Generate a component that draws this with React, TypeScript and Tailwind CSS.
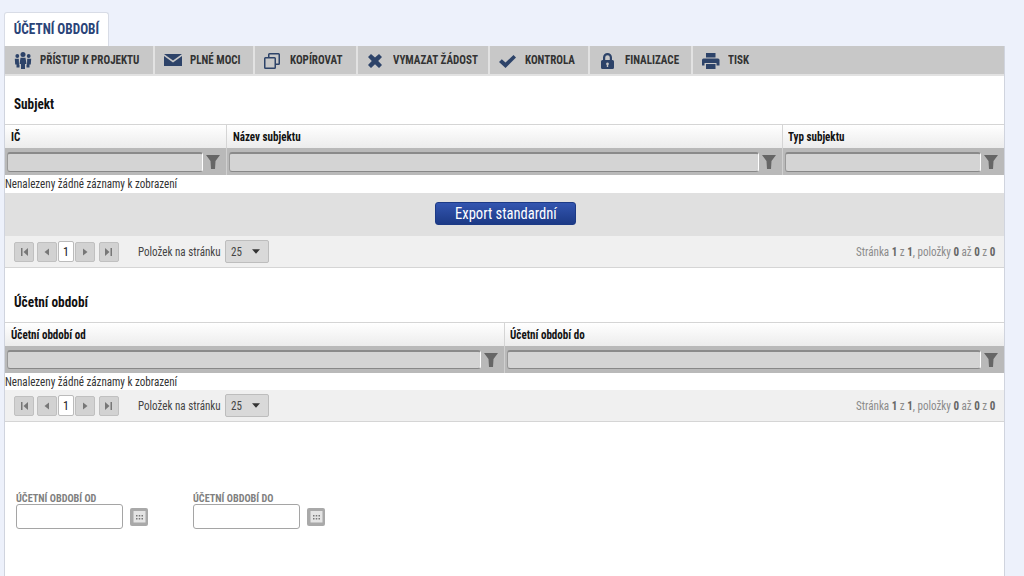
import React from "react";

const F = "font-['Roboto_Condensed','Liberation_Sans_Narrow',Roboto,sans-serif]";

const Ic = ({ children }: { children: React.ReactNode }) => (
  <svg width={20} height={20} viewBox="0 0 20 20" fill="#2d4369" className="shrink-0">{children}</svg>
);

const N = ({ children, o = "origin-left", s = "scale-x-[0.92]" }: { children: React.ReactNode; o?: string; s?: string }) => (
  <span className={`inline-block whitespace-nowrap ${o} ${s}`}>{children}</span>
);

const tools: { label: string; w: string; icon: React.ReactNode }[] = [
  { label: "PŘÍSTUP K PROJEKTU", w: "w-[150px]", icon: <Ic><circle cx="9" cy="4.500" r="2.500"/><circle cx="3.300" cy="6" r="1.900"/><circle cx="14.700" cy="6" r="1.900"/><path d="M6.500 7.800h5l1 6.200h-1.500v5H7v-5H5.500zM.8 8.800h4l.2 5.700H5.500V17.500H2.500v-3H1.200zM17.200 8.800h-4l-.2 5.700h-.5V17.500h3v-3h1.300z"/></Ic> },
  { label: "PLNÉ MOCI", w: "w-[100px]", icon: <Ic><path d="M0 4h18L9 10.500zM0 6l9 6.500L18 6v10H0z"/></Ic> },
  { label: "KOPÍROVAT", w: "w-[103px]", icon: <Ic><path fillRule="evenodd" d="M5.500 3h9A1.500 1.500 0 0116 4.500v9a1.500 1.500 0 01-1.500 1.500H12v2.500A1.500 1.500 0 0110.500 19h-9A1.500 1.500 0 010 17.500v-9A1.500 1.500 0 011.500 7H4V4.500A1.500 1.500 0 015.500 3zM5.500 4.500V7h5A1.500 1.500 0 0112 8.500v5h2.500v-9zM1.500 8.500v9h9v-9z"/></Ic> },
  { label: "VYMAZAT ŽÁDOST", w: "w-[132px]", icon: <Ic><path d="M4 4L8 7.500 12 4l3 3-3.800 4 3.800 4-3 3-4-3.700L4 18l-3-3 3.800-4L1 7z"/></Ic> },
  { label: "KONTROLA", w: "w-[100px]", icon: <Ic><path d="M0 12l2.800-2.800L6.500 12.500 14.500 5 17 7.500 6.500 18z"/></Ic> },
  { label: "FINALIZACE", w: "w-[103px]", icon: <Ic><path fillRule="evenodd" d="M4 10V7.500a4.500 4.500 0 019 0V10h.5a1.500 1.500 0 011.500 1.500v6a1.500 1.500 0 01-1.500 1.500h-10A1.500 1.500 0 012 17.500v-6A1.500 1.500 0 013.500 10zm2.200 0h4.600V7.500a2.300 2.300 0 00-4.600 0zM8.500 12.500a1.400 1.400 0 00-.7 2.600V17h1.400v-1.900a1.400 1.400 0 00-.7-2.600z"/></Ic> },
  { label: "TISK", w: "w-[80px]", icon: <Ic><path fillRule="evenodd" d="M4 3h9.500v4.500H4zM1.500 8.500h14.500A1.500 1.500 0 0117.500 10v5.500h-3V13h-12v2.500H0V10a1.500 1.500 0 011.500-1.500zM4 14h9.500v5H4z"/></Ic> },
];

const Funnel = () => (
  <svg width="14" height="16" viewBox="0 0 14 16" fill="#666" className="shrink-0"><path d="M0 1h14L9.500 7 9 15H5l-.5-8z"/></svg>
);

const Input = ({ h }: { h: string }) => (
  <div className={`${h} min-w-0 flex-1 rounded-[3px] border-t-2 border-l border-r border-b border-t-[#8a8a8a] border-l-[#9a9a9a] border-r-white border-b-[#888] bg-[#d4d4d4]`} />
);

type GridProps = { cols: { name: string; w: string; pl: string }[]; fh: string; ih: string; tp: string; rh: string };

const Grid = ({ cols, fh, ih, tp, rh }: GridProps) => (
  <>
    <div className="flex h-[24px] border-t border-[#d5d5d5] bg-gradient-to-b from-white to-[#ececec]">
      {cols.map((c, i) => (
        <div key={c.name} className={`${c.w} ${i ? "border-l border-[#d5d5d5]" : ""} flex items-center ${c.pl} ${tp} text-[12px] font-bold text-[#111]`}><N>{c.name}</N></div>
      ))}
    </div>
    <div className={`flex ${fh} bg-[#b9b9b9]`}>
      {cols.map((c, i) => (
        <div key={c.name} className={`${c.w} ${i ? "border-l border-[#d0d0d0]" : ""} flex items-center gap-[3px] pl-[2px] pr-[6px] ${tp}`}>
          <Input h={ih} /><Funnel />
        </div>
      ))}
    </div>
    <div className={`flex ${rh} items-center text-[12px] text-[#333]`}><N>Nenalezeny žádné záznamy k zobrazení</N></div>
  </>
);

const PBtn = ({ children }: { children: React.ReactNode }) => (
  <div className="flex h-[20px] w-[20px] items-center justify-center rounded-[2px] border border-[#c0c0c0] bg-[#d2d2d2]">
    <svg width="10" height="10" viewBox="0 0 10 10" fill="#777">{children}</svg>
  </div>
);

const Pager = () => (
  <div className="flex h-[32px] items-center border-b border-[#d5d5d5] bg-[#f0f0f0] px-[9px] text-[12px] text-[#444]">
    <PBtn><path d="M2 1h1.500v8H2zM9 1v8L4.500 5z"/></PBtn>
    <div className="ml-[3px]"><PBtn><path d="M7 1.500v7L2.500 5z"/></PBtn></div>
    <div className="ml-[1px] flex h-[21px] w-[16px] items-center justify-center rounded-[2px] border border-[#bbb] bg-white text-[12px] text-[#222]">1</div>
    <div className="ml-px"><PBtn><path d="M3 1.500v7L7.500 5z"/></PBtn></div>
    <div className="ml-[4px]"><PBtn><path d="M1 1v8l4.500-4zM6.500 1H8v8H6.500z"/></PBtn></div>
    <div className="ml-[19px] w-[83px]"><N>Položek na stránku</N></div>
    <div className="ml-[4px] flex h-[23px] w-[44px] items-center justify-between rounded-[2px] border border-[#bdbdbd] bg-[#d9d9d9] pl-[5px] pr-[8px]">
      <N>25</N>
      <svg width="8" height="5" viewBox="0 0 9 5" fill="#333"><path d="M0 0h9L4.500 5z"/></svg>
    </div>
    <div className="ml-auto text-[#8b8b8b]"><N o="origin-right">Stránka <b className="text-[#666]">1</b> z <b className="text-[#666]">1</b>, položky <b className="text-[#666]">0</b> až <b className="text-[#666]">0</b> z <b className="text-[#666]">0</b></N></div>
  </div>
);

const DateField = ({ label }: { label: string }) => (
  <div className="w-[177px]">
    <div className="text-[11px] font-bold leading-[11px] text-[#808080]"><N s="scale-x-[0.93]">{label}</N></div>
    <div className="flex items-center">
      <div className="h-[25px] w-[107px] rounded-[3px] border border-[#a5a5a5] bg-white" />
      <div className="ml-[7px] flex h-[18px] w-[18px] items-center justify-center rounded-[2px] bg-[#a9a9a9]">
        <svg width="13" height="13" viewBox="0 0 13 13"><rect x="0.500" y="1" width="12" height="11.500" fill="#e4e4e4"/><g fill="#777"><rect x="3" y="5" width="1.500" height="1.500"/><rect x="5.750" y="5" width="1.500" height="1.500"/><rect x="8.500" y="5" width="1.500" height="1.500"/><rect x="3" y="8" width="1.500" height="1.500"/><rect x="5.750" y="8" width="1.500" height="1.500"/><rect x="8.500" y="8" width="1.500" height="1.500"/></g></svg>
      </div>
    </div>
  </div>
);

export default function App() {
  return (
    <div className={`${F} h-[576px] overflow-hidden bg-[#edf1fb] pl-[4px] pr-[19px] pt-[12px]`}>
      <div className="flex h-[34px] w-[105px] items-center justify-center rounded-t-[3px] border border-b-0 border-[#d8dce6] bg-white text-[15px] font-bold text-[#2a4478]"><N o="origin-center" s="scale-x-[0.88]">ÚČETNÍ OBDOBÍ</N></div>
      <div className="h-[530px] border-l border-r border-[#d0d4de] bg-white">
        <div className="flex h-[30px] border-b-2 border-[#e2e2e2] bg-[#c8c8c8]">
          {tools.map((t, i) => (
            <div key={t.label} className={`${t.w} ${i < tools.length - 1 ? "border-r-2 border-[#e2e2e2]" : ""} flex items-center gap-[6px] pl-[9px] text-[12px] font-bold text-[#333]`}>
              {t.icon}<N>{t.label}</N>
            </div>
          ))}
        </div>
        <div className="flex h-[48px] items-center px-[9px] pt-[8px] text-[15px] font-bold text-[#111]"><N s="scale-x-[0.88]">Subjekt</N></div>
        <Grid tp="pt-[1px]" fh="h-[27px]" ih="h-[20px]" rh="h-[18px]" cols={[{ name: "IČ", w: "w-[221px]", pl: "pl-[6px]" }, { name: "Název subjektu", w: "w-[556px]", pl: "pl-[6px]" }, { name: "Typ subjektu", w: "flex-1", pl: "pl-[5px]" }]} />
        <div className="flex h-[43px] items-center justify-center bg-[#e0e0e0] pb-[2px] pl-[2px]">
          <div className="flex h-[23px] w-[141px] items-center justify-center rounded-[3px] border border-[#1c3a86] bg-gradient-to-b from-[#3355b0] to-[#1c3a86] text-[16px] text-white"><N o="origin-center" s="scale-x-[0.91]">Export standardní</N></div>
        </div>
        <Pager />
        <div className="flex h-[54px] items-center px-[9px] pt-[14px] text-[15px] font-bold text-[#111]"><N s="scale-x-[0.89]">Účetní období</N></div>
        <Grid tp="" fh="h-[27px]" ih="h-[19px]" rh="h-[17px]" cols={[{ name: "Účetní období od", w: "w-[499px]", pl: "pl-[6px]" }, { name: "Účetní období do", w: "flex-1", pl: "pl-[5px]" }]} />
        <Pager />
        <div className="flex pl-[11px] pt-[71px]">
          <DateField label="ÚČETNÍ OBDOBÍ OD" />
          <DateField label="ÚČETNÍ OBDOBÍ DO" />
        </div>
      </div>
    </div>
  );
}
